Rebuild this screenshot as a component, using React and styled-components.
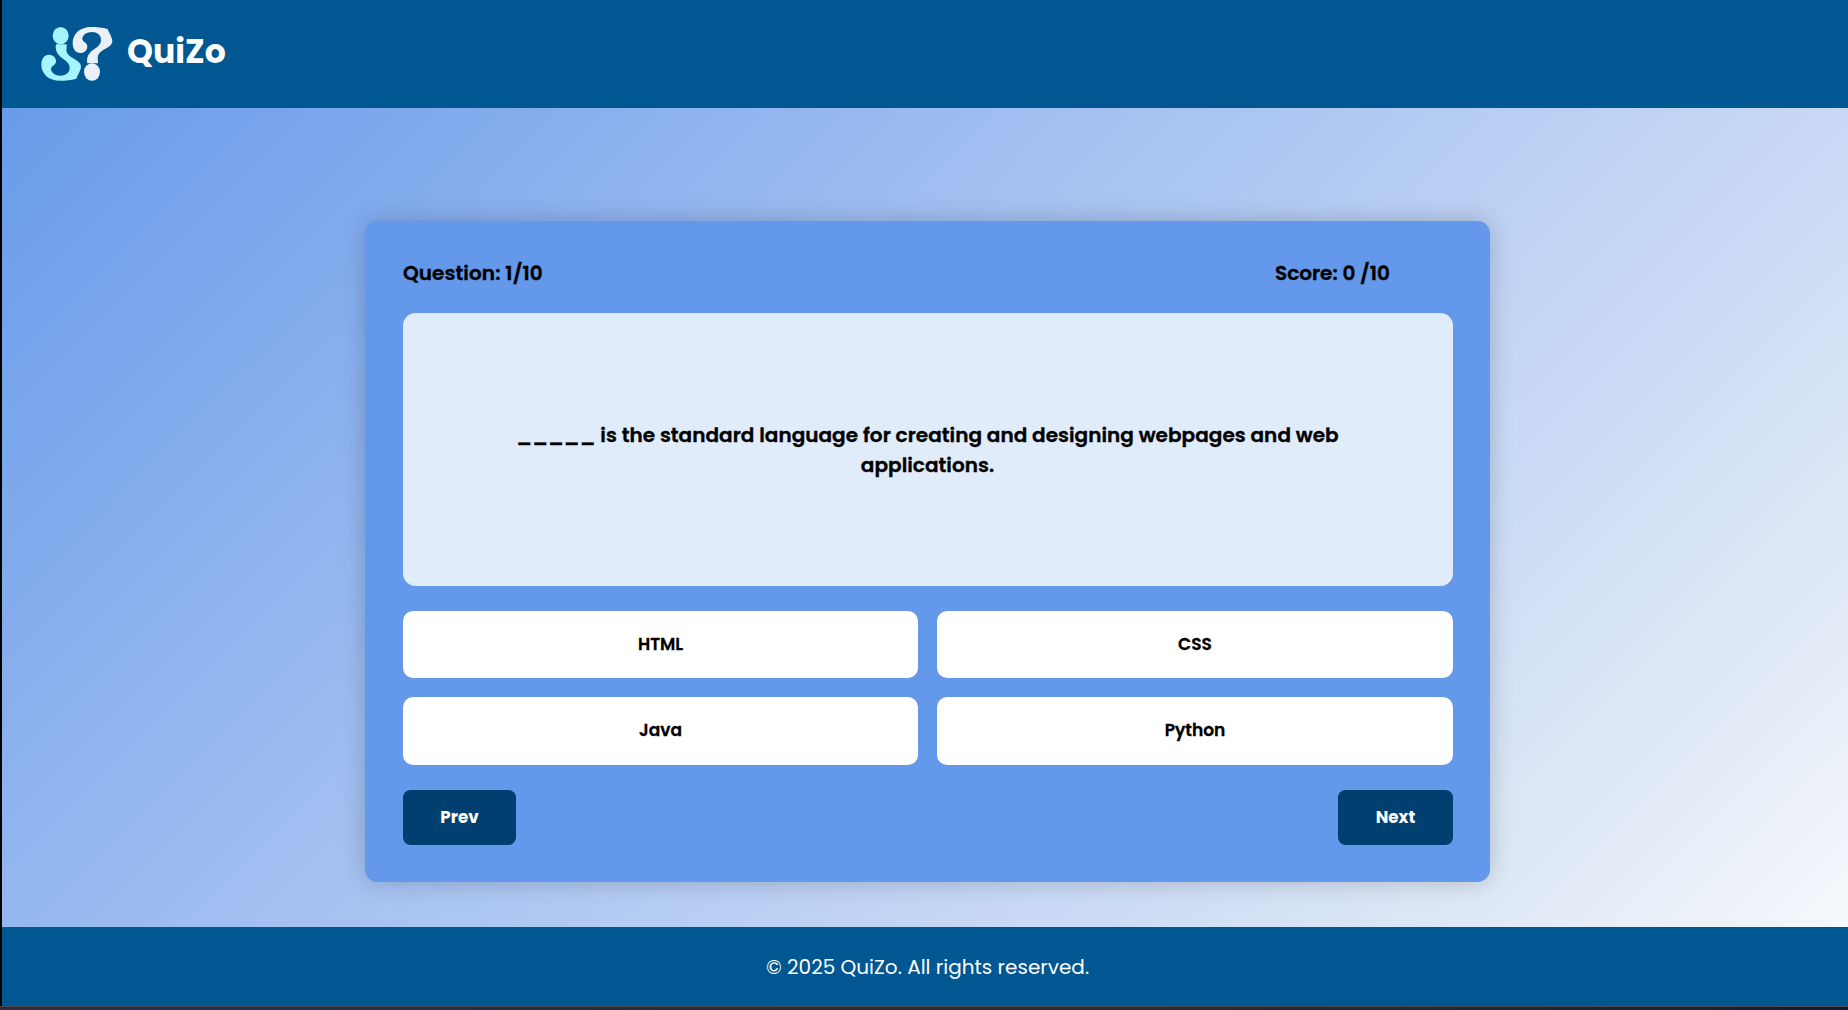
import React from "react";
import styled, { createGlobalStyle } from "styled-components";

const GlobalStyle = createGlobalStyle`
  *, *::before, *::after { box-sizing: border-box; }
  body {
    margin: 0;
    overflow: hidden;
    font-family: Poppins, Inter, "Open Sans", sans-serif;
    color: #000;
  }
`;

const Page = styled.div`
  height: 1010px;
  display: flex;
  flex-direction: column;
  overflow: hidden;
  background: #000;
`;

const Screen = styled.div`
  width: 1851px;
  height: 1006px;
  margin-left: 2px;
  display: flex;
  flex-direction: column;
`;

const Strip = styled.div`
  height: 4px;
  border-top: 1px solid #4a4a55;
  background: linear-gradient(90deg, #33293c 0%, #20304f 10%, #2b2a33 45%, #2b2a33 60%, #162436 92%, #101a30 100%);
`;

const Header = styled.header`
  height: 108px;
  padding: 0 0 3px 28px;
  display: flex;
  align-items: center;
  background: #005792;
`;

const LogoArt = styled.svg`
  width: 90px;
  height: 75px;
`;

const Brand = styled.h1`
  margin: 0 0 1px 7px;
  font-size: 33px;
  line-height: 48px;
  font-weight: 700;
  color: #fff;
`;

const Main = styled.main`
  height: 819px;
  padding-top: 113px;
  display: flex;
  justify-content: center;
  align-items: flex-start;
  background: linear-gradient(135deg, #689bea 0%, #9bbbf0 35%, #c9d9f5 69%, #dfe9f6 86%, #f6f8fb 100%);
`;

const Card = styled.section`
  width: 1125px;
  height: 661px;
  padding: 37px 37px 37px 38px;
  border-radius: 12.5px;
  display: flex;
  flex-direction: column;
  background: #6498ea;
  box-shadow: 0 0 25px rgba(0, 0, 0, 0.2);
`;

const Status = styled.div`
  height: 30px;
  margin-bottom: 25px;
  padding-right: 63px;
  display: flex;
  justify-content: space-between;
`;

const StatusText = styled.span`
  font-size: 20px;
  line-height: 30px;
  font-weight: 600;
  letter-spacing: ${(p) => p.$track}px;
  -webkit-text-stroke: 0.35px currentColor;
  white-space: pre;
`;

const Question = styled.div`
  height: 273px;
  margin-bottom: 25px;
  padding-right: 1px;
  border-radius: 12.5px;
  display: flex;
  flex-direction: column;
  align-items: center;
  justify-content: center;
  background: #e0ecfa;
`;

const QuestionLine = styled.span`
  font-size: 20px;
  line-height: 30px;
  font-weight: 600;
  letter-spacing: 0.04px;
  -webkit-text-stroke: 0.35px currentColor;
  white-space: nowrap;
`;

const Options = styled.div`
  display: grid;
  grid-template-columns: 515px 516px;
  grid-template-rows: 67px 68px;
  gap: 19px;
  margin-bottom: 25px;
`;

const Option = styled.button`
  padding: 0 0 2px;
  border: 0;
  border-radius: 10px;
  background: #fff;
  color: #000;
  font: inherit;
  font-size: 17px;
  line-height: 24px;
  font-weight: 600;
  -webkit-text-stroke: 0.3px currentColor;
`;

const Controls = styled.div`
  display: flex;
  justify-content: space-between;
`;

const NavButton = styled.button`
  width: ${(p) => p.$width}px;
  height: 55px;
  padding: 0;
  border: 0;
  border-radius: 7.5px;
  background: #003f6f;
  color: #fff;
  font: inherit;
  font-size: 16.75px;
  line-height: 25px;
  font-weight: 700;
`;

const Footer = styled.footer`
  height: 79px;
  display: flex;
  align-items: center;
  justify-content: center;
  background: #005792;
  color: #fff;
  font-size: 20px;
  line-height: 30px;
`;

const MARK =
  "M172 145 C169 130 174 118 185 108 C199 97 213 91 213 74 C213 60 201 51 186 51 C169 51 157 61 157 72 C158 82 173 82 172 96 C171 108 160 114 151 114 C137 114 128 102 128 84 C128 55 152 36 183 36 C200 36 219 38 233 42 C237 54 247 66 247 80 C243 98 220 100 208 115 C200 125 205 133 204 145 Z";

function Logo() {
  return (
    <LogoArt viewBox="0 0 270 225" aria-label="QuiZo">
      <g fill="#e9f0f8">
        <path d={MARK} />
        <ellipse cx="186" cy="171" rx="24" ry="26" />
      </g>
      <g fill="#a5f4ff" transform="translate(-94 233) scale(1 -1)">
        <path d={MARK} />
        <ellipse cx="186" cy="171" rx="24" ry="26" />
      </g>
    </LogoArt>
  );
}

const OPTIONS = ["HTML", "CSS", "Java", "Python"];

export default function App() {
  return (
    <>
      <GlobalStyle />
      <Page>
        <Screen>
          <Header>
            <Logo />
            <Brand>QuiZo</Brand>
          </Header>
          <Main>
            <Card>
              <Status>
                <StatusText $track={0.08}>Question: 1/10</StatusText>
                <StatusText $track={0}>Score: 0 /10</StatusText>
              </Status>
              <Question>
                <QuestionLine>
                  _____ is the standard language for creating and designing webpages and web
                </QuestionLine>
                <QuestionLine>applications.</QuestionLine>
              </Question>
              <Options>
                {OPTIONS.map((label) => (
                  <Option key={label}>{label}</Option>
                ))}
              </Options>
              <Controls>
                <NavButton $width={113}>Prev</NavButton>
                <NavButton $width={115}>Next</NavButton>
              </Controls>
            </Card>
          </Main>
          <Footer>© 2025 QuiZo. All rights reserved.</Footer>
        </Screen>
        <Strip />
      </Page>
    </>
  );
}
